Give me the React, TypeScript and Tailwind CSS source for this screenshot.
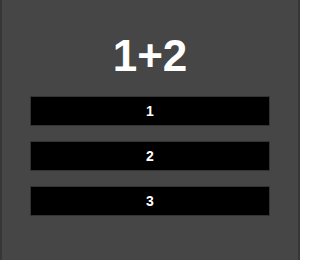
const options = ["1", "2", "3"];

export default function App() {
  return (
    <div
      className="h-[260px] w-[300px] overflow-hidden border-x-2 border-[#363636] bg-[#464646] text-white"
      style={{ fontFamily: '"Liberation Sans", Arial, sans-serif' }}
    >
      <h1 className="pt-[34px] text-center text-[44px] font-bold leading-[44px]">1+2</h1>
      <div className="mt-[18px] flex flex-col items-center gap-[15px]">
        {options.map((opt) => (
          <button
            key={opt}
            type="button"
            className="flex h-[30px] w-[240px] items-center justify-center border border-[#333333] bg-black text-[14px] font-bold text-white"
          >
            {opt}
          </button>
        ))}
      </div>
    </div>
  );
}
